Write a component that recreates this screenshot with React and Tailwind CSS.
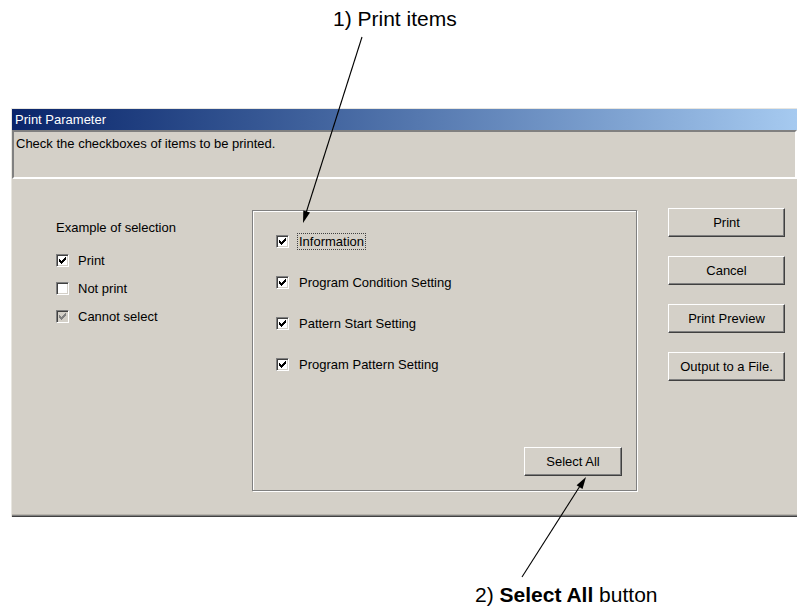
import React from 'react'

const ITEMS = [
    { label: 'Information', focused: true },
    { label: 'Program Condition Setting' },
    { label: 'Pattern Start Setting' },
    { label: 'Program Pattern Setting' },
]

const BUTTONS = ['Print', 'Cancel', 'Print Preview', 'Output to a File.']

// pixel check mark, one 3px column per x
const CHECK = 'M0 2h1v3h-1z M1 3h1v3h-1z M2 4h1v3h-1z M3 3h1v3h-1z M4 2h1v3h-1z M5 1h1v3h-1z M6 0h1v3h-1z'

// Classic sunken 13px checkbox
function CheckBox({ checked, disabled }) {
    return (
        <span
            className={`flex h-[13px] w-[13px] shrink-0 items-center justify-center border border-t-[#808080] border-l-[#808080] border-r-white border-b-white shadow-[inset_1px_1px_#404040,inset_-1px_-1px_#d4d0c8] ${disabled ? 'bg-[#d4d0c8]' : 'bg-white'}`}
        >
            {checked && (
                <svg width="7" height="7" viewBox="0 0 7 7" shapeRendering="crispEdges">
                    <path d={CHECK} fill={disabled ? '#808080' : '#000'} />
                </svg>
            )}
        </span>
    )
}

function WinButton({ children, className = '' }) {
    return (
        <div
            className={`flex items-center justify-center border border-t-white border-l-white border-r-[#404040] border-b-[#404040] bg-[#d4d0c8] text-[13px] text-black shadow-[inset_-1px_-1px_#808080] ${className}`}
        >
            {children}
        </div>
    )
}

export default function App() {
    return (
        <div className="relative h-[607px] w-[797px] overflow-hidden bg-white font-['Liberation_Sans',Arial,sans-serif] text-black">
            {/* Top annotation */}
            <div className="h-[108px] pl-[333px] pt-[8px] text-[21px] leading-[21px]">1) Print items</div>

            {/* Dialog */}
            <div className="ml-[11px] flex h-[409px] flex-col border-l border-t border-[#e8e6e0] bg-[#d4d0c8] shadow-[inset_0_-1px_#404040,inset_0_-2px_#808080,inset_0_-3px_#b8b4ac]">
                {/* Title bar */}
                <div className="h-[21px] bg-gradient-to-r from-[#0a246a] to-[#a6caf0] pl-[3px] pt-[3px] text-[13px] leading-[15px] text-white">
                    Print Parameter
                </div>

                {/* Message */}
                <div className="h-[49px] border-2 border-t-[#808080] border-l-[#808080] border-r-white border-b-white pl-[2px] pt-[4px] text-[13px] leading-[15px]">
                    Check the checkboxes of items to be printed.
                </div>

                {/* Body */}
                <div className="flex flex-1 items-start pl-[44px] text-[13px] leading-[15px]">
                    {/* Example of selection */}
                    <div className="flex w-[196px] flex-col pt-[41px]">
                        <div>Example of selection</div>
                        <div className="mt-[18px] flex flex-col gap-[13px]">
                            <div className="flex h-[15px] items-center gap-[9px]">
                                <CheckBox checked />
                                <span>Print</span>
                            </div>
                            <div className="flex h-[15px] items-center gap-[9px]">
                                <CheckBox />
                                <span>Not print</span>
                            </div>
                            <div className="flex h-[15px] items-center gap-[9px]">
                                <CheckBox checked disabled />
                                <span>Cannot select</span>
                            </div>
                        </div>
                    </div>

                    {/* Print items group */}
                    <div className="mt-[31px] flex h-[281px] w-[385px] flex-col border border-[#808080] pl-[23px] pt-[23px] shadow-[inset_1px_1px_#ffffff,1px_1px_#ffffff]">
                        <div className="flex flex-col gap-[26px]">
                            {ITEMS.map(item => (
                                <div key={item.label} className="flex h-[15px] items-center gap-[8px]">
                                    <CheckBox checked />
                                    <span className={item.focused ? 'border border-dotted border-[#404040] px-[1px]' : 'px-[2px]'}>
                                        {item.label}
                                    </span>
                                </div>
                            ))}
                        </div>
                        <WinButton className="mb-[14px] mr-[14px] mt-auto h-[29px] w-[98px] self-end">Select All</WinButton>
                    </div>

                    {/* Action buttons */}
                    <div className="ml-[31px] mt-[29px] flex flex-col gap-[19px]">
                        {BUTTONS.map(label => (
                            <WinButton key={label} className="h-[29px] w-[117px]">
                                {label}
                            </WinButton>
                        ))}
                    </div>
                </div>
            </div>

            {/* Bottom annotation */}
            <div className="pl-[475px] pt-[67px] text-[21px] leading-[21px]">
                2) <span className="font-bold">Select All</span> button
            </div>

            {/* Arrows */}
            <svg className="pointer-events-none absolute left-0 top-0" width="797" height="607">
                <line x1="362" y1="37" x2="306" y2="213" stroke="#000" strokeWidth="1.1" />
                <polygon points="303,223 310,212.6 303.3,210.5" fill="#000" />
                <line x1="522" y1="577" x2="580" y2="486" stroke="#000" strokeWidth="1.1" />
                <polygon points="586,477 582.5,489 576.6,485.2" fill="#000" />
            </svg>
        </div>
    )
}
